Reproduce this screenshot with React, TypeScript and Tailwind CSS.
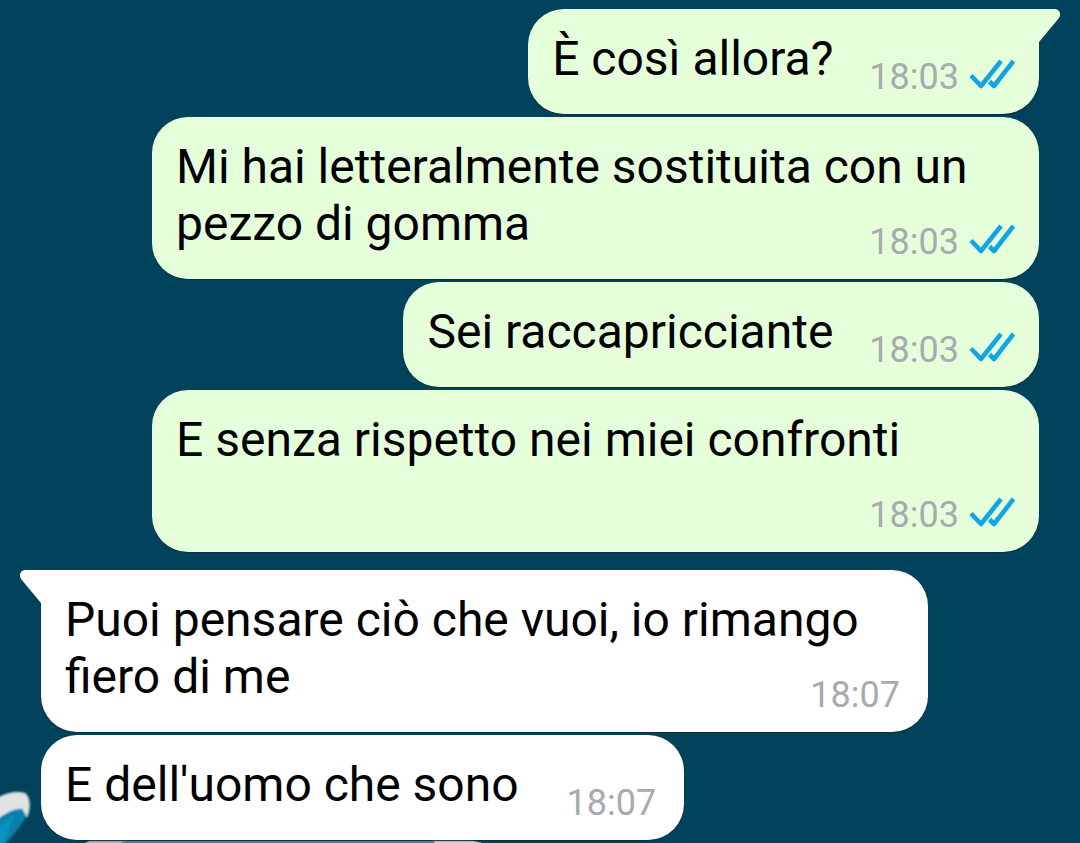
import { clsx } from "clsx";

type Message = {
  text: string;
  time: string;
  sent?: boolean;
  first?: boolean;
};

const messages: Message[] = [
  { text: "È così allora?", time: "18:03", sent: true, first: true },
  { text: "Mi hai letteralmente sostituita con un pezzo di gomma", time: "18:03", sent: true },
  { text: "Sei raccapricciante", time: "18:03", sent: true },
  { text: "E senza rispetto nei miei confronti", time: "18:03", sent: true },
  { text: "Puoi pensare ciò che vuoi, io rimango fiero di me", time: "18:07", first: true },
  { text: "E dell'uomo che sono", time: "18:07" },
];

const ReadTicks = () => (
  <svg width="46" height="38" viewBox="0 0 46 38" fill="none" stroke="#12a5e6" strokeWidth="4.6" strokeLinejoin="round" role="img" aria-label="Letto">
    <path d="M2 17.5 L12 28 L32 3" />
    <path d="M20.500 23.500 L25 28 L44.500 3" />
  </svg>
);

// little corner that sticks out of the first bubble of a group
const Tail = ({ sent }: { sent?: boolean }) => (
  <svg
    className={clsx("absolute top-0", sent ? "left-full text-[#e5ffdb]" : "right-full -scale-x-100 text-white")}
    width="22"
    height="34"
    viewBox="0 0 22 34"
    fill="currentColor"
    aria-hidden="true"
  >
    <path d="M0 0H15.500C20.500 0 22.500 5 20 9L0 33Z" />
  </svg>
);

const Bubble = ({ text, time, sent, first }: Message) => (
  <li
    className={clsx(
      "relative flow-root max-w-[887px] rounded-[36px] px-6 pt-[21px] pb-4 shadow-[0_1px_1px_#0b2f3c]",
      sent ? "self-end bg-[#e5ffdb]" : "self-start bg-white",
      first && sent && "rounded-tr-none",
      first && !sent && "mt-[15px] rounded-tl-none"
    )}
  >
    {first && <Tail sent={sent} />}
    {text}
    <span
      className={clsx(
        "float-right mt-[26px] flex items-center text-4xl leading-[42px] text-[#a7abad]",
        sent ? "ml-9 gap-2.5" : "mr-1 ml-12"
      )}
    >
      <time>{time}</time>
      {sent && <ReadTicks />}
    </span>
  </li>
);

const Wallpaper = () => (
  <svg className="absolute bottom-0 left-0" width="500" height="60" viewBox="0 0 500 60" aria-hidden="true">
    <g className="blur-[1px]">
      <path d="M-4 18L20 16L28 30C23 40 16 50 4 62H-4Z" fill="#0a7fab" />
      <path d="M-4 45L14 32L4 62H-4Z" fill="#0793bd" />
      <path d="M-4 16C6 9 18 8 25 10C31 14 31 26 27 35L22 26C14 26 6 30 -4 38Z" fill="#dfe3e6" />
    </g>
    <path d="M85 60C95 55 110 54 130 54H440C460 55 472 57 482 60Z" fill="#5382a0" />
    <path d="M85 60C95 55 110 54 135 54L120 60Z" fill="#a3b4c5" />
    <path d="M430 54C455 55 472 57 482 60H435Z" fill="#c6cbd2" />
  </svg>
);

const App = () => {
  return (
    <main className="relative min-h-screen overflow-hidden bg-[#01425c] px-[41px] pt-[9px] pb-[3px] font-['Roboto',sans-serif] text-5xl leading-[57px] text-black">
      <Wallpaper />
      <ul className="flex flex-col gap-[3px]">
        {messages.map((message) => (
          <Bubble key={message.text} {...message} />
        ))}
      </ul>
    </main>
  );
};

export default App;
